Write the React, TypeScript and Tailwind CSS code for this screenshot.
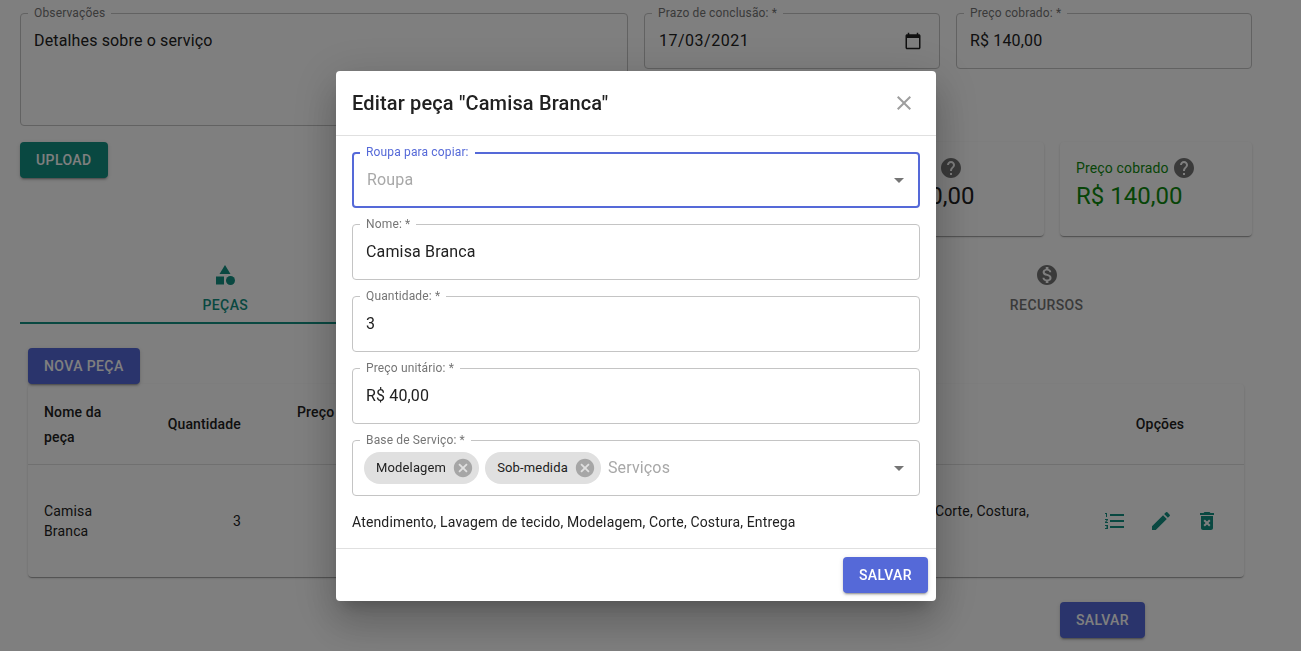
import type { ReactNode } from "react";

const btnShadow =
  "shadow-[0px_3px_1px_-2px_rgba(0,0,0,0.2),0px_2px_2px_0px_rgba(0,0,0,0.14),0px_1px_5px_0px_rgba(0,0,0,0.12)]";
const cardShadow =
  "shadow-[0px_2px_1px_-1px_rgba(0,0,0,0.2),0px_1px_1px_0px_rgba(0,0,0,0.14),0px_1px_3px_0px_rgba(0,0,0,0.12)]";

function Icon({ d, className }: { d: string; className: string }) {
  return (
    <svg viewBox="0 0 24 24" fill="currentColor" className={className}>
      <path d={d} />
    </svg>
  );
}

const icons = {
  help: "M12 2C6.48 2 2 6.48 2 12s4.48 10 10 10 10-4.48 10-10S17.52 2 12 2zm1 17h-2v-2h2v2zm2.07-7.75l-.9.92C13.45 12.9 13 13.5 13 15h-2v-.5c0-1.1.45-2.1 1.17-2.83l1.24-1.26c.37-.36.59-.86.59-1.41 0-1.1-.9-2-2-2s-2 .9-2 2H8c0-2.21 1.79-4 4-4s4 1.79 4 4c0 .88-.36 1.68-.93 2.25z",
  money:
    "M12 2C6.48 2 2 6.48 2 12s4.48 10 10 10 10-4.48 10-10S17.52 2 12 2zm1.41 16.09V20h-2.67v-1.93c-1.71-.36-3.16-1.46-3.27-3.4h1.96c.1 1.05.82 1.87 2.65 1.87 1.96 0 2.4-.98 2.4-1.59 0-.83-.44-1.61-2.67-2.14-2.48-.6-4.18-1.62-4.18-3.67 0-1.72 1.39-2.84 3.11-3.21V4h2.67v1.95c1.86.45 2.79 1.86 2.85 3.39H14.3c-.05-1.11-.64-1.87-2.22-1.87-1.5 0-2.4.68-2.4 1.64 0 .84.65 1.39 2.67 1.91s4.18 1.39 4.18 3.91c-.01 1.83-1.38 2.83-3.12 3.16z",
  list: "M2 17h2v.5H3v1h1v.5H2v1h3v-4H2v1zm1-9h1V4H2v1h1v3zm-1 3h1.8L2 13.1v.9h3v-1H3.2L5 10.9V10H2v1zm5-6v2h14V5H7zm0 14h14v-2H7v2zm0-6h14v-2H7v2z",
  edit: "M3 17.25V21h3.75L17.81 9.94l-3.75-3.75L3 17.25zM20.71 7.04c.39-.39.39-1.02 0-1.41l-2.34-2.34a.9959.9959 0 0 0-1.41 0l-1.83 1.83 3.75 3.75 1.83-1.83z",
  trash:
    "M6 19c0 1.1.9 2 2 2h8c1.1 0 2-.9 2-2V7H6v12zm2.46-7.12l1.41-1.41L12 12.59l2.12-2.12 1.41 1.41L13.41 14l2.12 2.12-1.41 1.41L12 15.41l-2.12 2.12-1.41-1.41L10.59 14l-2.13-2.12zM15.5 4l-1-1h-5l-1 1H5v2h14V4z",
  close:
    "M19 6.41L17.59 5 12 10.59 6.41 5 5 6.41 10.59 12 5 17.59 6.41 19 12 13.41 17.59 19 19 17.59 13.41 12z",
  cancel:
    "M12 2C6.47 2 2 6.47 2 12s4.47 10 10 10 10-4.47 10-10S17.53 2 12 2zm5 13.59L15.59 17 12 13.41 8.41 17 7 15.59 10.59 12 7 8.41 8.41 7 12 10.59 15.59 7 17 8.41 13.41 12 17 15.59z",
  calendar:
    "M20 3h-1V1h-2v2H7V1H5v2H4c-1.1 0-2 .9-2 2v16c0 1.1.9 2 2 2h16c1.1 0 2-.9 2-2V5c0-1.1-.9-2-2-2zm0 18H4V8h16v13z",
  arrow: "M7 10l5 5 5-5z",
};

function Field({
  label,
  children,
  className = "",
  focused = false,
}: {
  label: string;
  children: ReactNode;
  className?: string;
  focused?: boolean;
}) {
  return (
    <fieldset
      className={`rounded ${
        focused ? "border-2 border-[#5569d8] px-3" : "border border-[#c4c4c4] px-[13px]"
      } ${className}`}
    >
      <legend
        className={`-ml-1.5 px-1.5 text-xs leading-[13px] ${
          focused ? "text-[#5569d8]" : "text-[#757575]"
        }`}
      >
        {label}
      </legend>
      {children}
    </fieldset>
  );
}

function Chip({ label }: { label: string }) {
  return (
    <div className="flex h-8 items-center rounded-2xl bg-[#e0e0e0] pl-3 pr-[5px] text-[13px] text-[#212121]">
      <span>{label}</span>
      <Icon d={icons.cancel} className="ml-1.5 size-[22px] text-[#a6a6a6]" />
    </div>
  );
}

function Dialog() {
  return (
    <div className="fixed inset-0 bg-black/50">
      <div className="ml-[336px] mt-[71px] w-[600px] rounded bg-white text-[#212121] shadow-[0px_11px_15px_-7px_rgba(0,0,0,0.2),0px_24px_38px_3px_rgba(0,0,0,0.14),0px_9px_46px_8px_rgba(0,0,0,0.12)]">
        <div className="flex h-[65px] items-center justify-between border-b border-[#e0e0e0] pl-4 pr-5">
          <h2 className="text-xl font-medium">Editar peça "Camisa Branca"</h2>
          <Icon d={icons.close} className="size-6 text-[#9e9e9e]" />
        </div>

        <div className="flex h-[413px] flex-col gap-2.5 border-b border-[#e0e0e0] px-4 pt-2.5">
          <Field label="Roupa para copiar:" focused className="h-[62px]">
            <div className="flex h-[41px] items-center justify-between text-base text-[#a8a8a8]">
              <span className="pl-px">Roupa</span>
              <Icon d={icons.arrow} className="-mr-[5px] size-6 text-[#757575]" />
            </div>
          </Field>
          <Field label="Nome: *" className="h-[62px]">
            <div className="flex h-[42px] items-center">Camisa Branca</div>
          </Field>
          <Field label="Quantidade: *" className="h-[62px]">
            <div className="flex h-[42px] items-center">3</div>
          </Field>
          <Field label="Preço unitário: *" className="h-[62px]">
            <div className="flex h-[42px] items-center">R$ 40,00</div>
          </Field>
          <Field label="Base de Serviço: *" className="h-[62px]">
            <div className="-ml-0.5 flex h-[42px] items-center gap-1.5">
              <Chip label="Modelagem" />
              <Chip label="Sob-medida" />
              <span className="ml-px flex-1 text-[#a8a8a8]">Serviços</span>
              <Icon d={icons.arrow} className="-mr-[5px] size-6 text-[#757575]" />
            </div>
          </Field>
          <p className="mt-1.5 text-sm leading-5">
            Atendimento, Lavagem de tecido, Modelagem, Corte, Costura, Entrega
          </p>
        </div>

        <div className="flex h-[52px] items-center justify-end pr-2">
          <button
            className={`h-9 rounded bg-[#5569d8] px-4 text-sm font-medium tracking-[0.4px] text-white ${btnShadow}`}
          >
            SALVAR
          </button>
        </div>
      </div>
    </div>
  );
}

function Background() {
  return (
    <div className="w-[1252px] pl-5 pt-[7px] text-[#212121]">
      <div className="flex items-start gap-4">
        <Field label="Observações" className="h-[119px] w-[608px]">
          <div className="flex h-[42px] items-center">Detalhes sobre o serviço</div>
        </Field>
        <Field label="Prazo de conclusão: *" className="h-[62px] w-[296px]">
          <div className="flex h-[42px] items-center justify-between">
            <span className="pl-px tracking-[0.5px]">17/03/2021</span>
            <Icon d={icons.calendar} className="mr-1 size-[18px] text-[#212121]" />
          </div>
        </Field>
        <Field label="Preço cobrado: *" className="h-[62px] w-[296px]">
          <div className="flex h-[42px] items-center">R$ 140,00</div>
        </Field>
      </div>

      <div className="mt-4 flex items-start justify-between">
        <button
          className={`h-9 rounded bg-[#139082] px-4 text-sm font-medium tracking-[0.4px] text-white ${btnShadow}`}
        >
          UPLOAD
        </button>
        <div className="flex gap-4">
          <div className={`h-[94px] w-[192px] rounded bg-white px-4 pt-3.5 ${cardShadow}`}>
            <div className="flex items-center gap-1 text-sm">
              <span className="w-[67px]">Custo</span>
              <Icon d={icons.help} className="size-6 text-[#757575]" />
            </div>
            <div className="text-2xl tracking-normal">R$ 100,00</div>
          </div>
          <div className={`h-[94px] w-[192px] rounded bg-white px-4 pt-3.5 ${cardShadow}`}>
            <div className="flex items-center gap-[3px] text-sm text-[#0f8a0f]">
              <span>Preço cobrado</span>
              <Icon d={icons.help} className="size-6 text-[#757575]" />
            </div>
            <div className="text-2xl tracking-normal text-[#0f8a0f]">R$ 140,00</div>
          </div>
        </div>
      </div>

      <div className="mt-3.5 flex h-[74px]">
        <div className="flex flex-1 flex-col items-center border-b-2 border-[#139082] pt-[13px] text-[#139082]">
          <svg viewBox="0 0 24 24" fill="currentColor" className="size-6">
            <path d="M12 2l-5.5 9h11z" />
            <circle cx="17.5" cy="17.5" r="4.5" />
            <path d="M3 13.5h8v8H3z" />
          </svg>
          <span className="mt-2 text-sm font-medium tracking-[0.4px]">PEÇAS</span>
        </div>
        <div className="flex-1" />
        <div className="flex flex-1 flex-col items-center pt-[13px] text-[#757575]">
          <Icon d={icons.money} className="size-6" />
          <span className="mt-2 text-sm font-medium tracking-[0.4px]">RECURSOS</span>
        </div>
      </div>

      <div className="mt-6 px-2">
        <button
          className={`relative h-9 rounded bg-[#5569d8] px-4 text-sm font-medium tracking-[0.4px] text-white ${btnShadow}`}
        >
          NOVA PEÇA
        </button>
        <div className={`rounded bg-white ${cardShadow}`}>
          <table className="w-full table-fixed text-sm">
            <thead>
              <tr className="h-20 border-b border-[#e0e0e0]">
                <th className="w-[124px] pl-4 pr-8 pt-0.5 text-left font-medium leading-[25px]">Nome da peça</th>
                <th className="w-[129px] pl-2 pr-10 text-right font-medium">Quantidade</th>
                <th className="w-[341px] whitespace-nowrap px-4 pb-[23px] text-left font-medium leading-[25px]">
                  Preço unitário
                </th>
                <th className="w-[454px]" />
                <th className="w-[168px] text-center font-medium">Opções</th>
              </tr>
            </thead>
            <tbody>
              <tr className="h-[113px]">
                <td className="px-4 leading-5">Camisa Branca</td>
                <td className="pl-4 pr-10 text-right">3</td>
                <td />
                <td className="px-4 leading-5">
                  Atendimento, Lavagem de tecido, Modelagem, Corte, Costura, Entrega
                </td>
                <td>
                  <div className="ml-px flex justify-center text-[#139082]">
                    <div className="flex w-[46px] justify-center">
                      <Icon d={icons.list} className="size-6" />
                    </div>
                    <div className="flex w-[46px] justify-center">
                      <Icon d={icons.edit} className="size-6" />
                    </div>
                    <div className="flex w-[46px] justify-center">
                      <Icon d={icons.trash} className="size-6" />
                    </div>
                  </div>
                </td>
              </tr>
            </tbody>
          </table>
        </div>
        <div className="mr-[99px] mt-[25px] flex justify-end">
          <button
            className={`h-9 rounded bg-[#5569d8] px-4 text-sm font-medium tracking-[0.4px] text-white ${btnShadow}`}
          >
            SALVAR
          </button>
        </div>
      </div>
    </div>
  );
}

export default function App() {
  return (
    <div className="h-[651px] overflow-hidden bg-white font-['Roboto',sans-serif] text-base tracking-[0.15px]">
      <Background />
      <Dialog />
    </div>
  );
}
